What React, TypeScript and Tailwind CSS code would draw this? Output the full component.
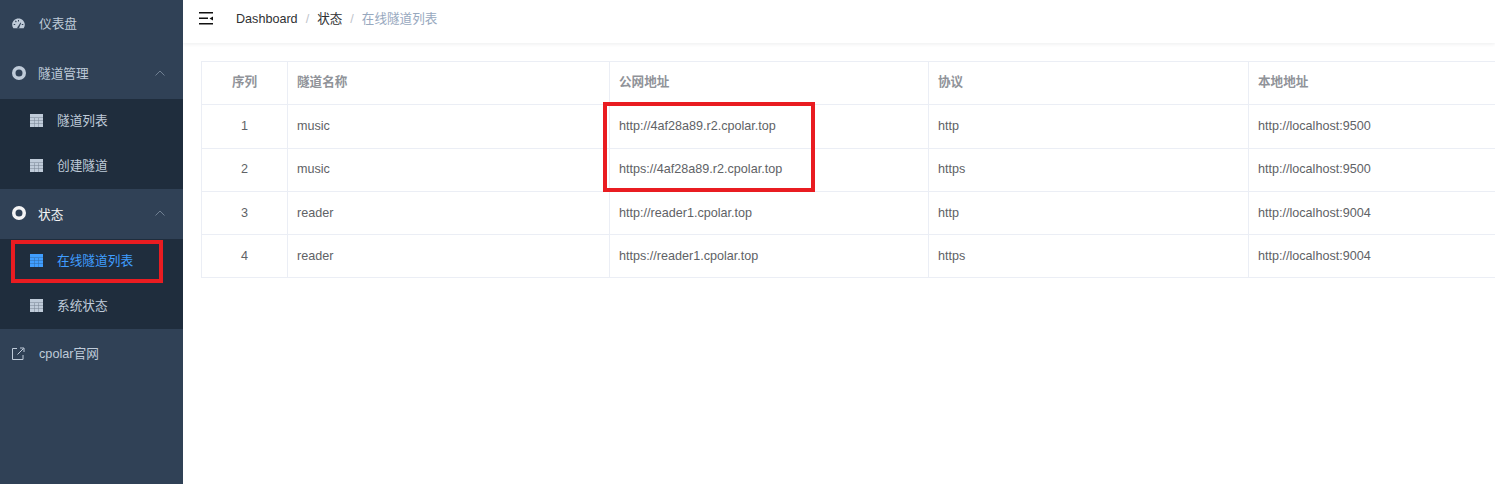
const FONT = "font-['Liberation_Sans','Noto_Sans_CJK_SC',sans-serif]";

const rows = [
  { id: 1, name: "music", url: "http://4af28a89.r2.cpolar.top", proto: "http", local: "http://localhost:9500" },
  { id: 2, name: "music", url: "https://4af28a89.r2.cpolar.top", proto: "https", local: "http://localhost:9500" },
  { id: 3, name: "reader", url: "http://reader1.cpolar.top", proto: "http", local: "http://localhost:9004" },
  { id: 4, name: "reader", url: "https://reader1.cpolar.top", proto: "https", local: "http://localhost:9004" },
];

function GaugeIcon() {
  return (
    <svg width="13" height="11" viewBox="0 0 13 11" className="mb-[2px] shrink-0">
      <path
        fillRule="evenodd"
        fill="currentColor"
        d="M6.5 0.5C3 0.5 0.2 3.2 0.2 6.6c0 1.4.4 2.7 1.2 3.6h10.2c.8-.9 1.2-2.2 1.2-3.6C12.600 3.200 10 .5 6.500 .5zM6 2h1v1.500H6zM3 3.200l.8-.6.9 1.200-.8.6zM1.700 6h1.500v1H1.700zM9.800 6h1.500v1H9.800zM6 8.500l2.500-4 .7.400L7.300 9.200A1 1 0 1 1 6 8.500z"
      />
    </svg>
  );
}

function RingIcon() {
  return (
    <svg width="14" height="14" viewBox="0 0 14 14" className="mb-[2px] shrink-0">
      <circle cx="7" cy="7" r="5.250" fill="none" stroke="currentColor" strokeWidth="3.500" />
    </svg>
  );
}

function TableIcon() {
  return (
    <svg width="13" height="13" viewBox="0 0 13 13" className="mb-[3px] shrink-0" fill="currentColor">
      <rect x="0" y="0" width="13" height="13" opacity="0.55" />
      <rect x="0" y="0" width="13" height="3.500" />
      <rect x="0" y="4" width="4" height="2.500" />
      <rect x="4.500" y="4" width="4" height="2.500" />
      <rect x="9" y="4" width="4" height="2.500" />
      <rect x="0" y="7" width="4" height="2.500" />
      <rect x="4.500" y="7" width="4" height="2.500" />
      <rect x="9" y="7" width="4" height="2.500" />
      <rect x="0" y="10" width="4" height="3" />
      <rect x="4.500" y="10" width="4" height="3" />
      <rect x="9" y="10" width="4" height="3" />
    </svg>
  );
}

function LinkIcon() {
  return (
    <svg width="13" height="13" viewBox="0 0 13 13" className="mb-[2px] shrink-0" fill="none" stroke="currentColor" strokeWidth="1">
      <path d="M5 1.500H.5v11H11V8" />
      <path d="M5.500 7.500l6-6M8 1h4v4" />
    </svg>
  );
}

function Chevron() {
  return (
    <svg width="10" height="6" viewBox="0 0 10 6" className="mb-[2px] ml-auto mr-[18px] shrink-0 text-[#6f7f92]" fill="none" stroke="currentColor" strokeWidth="1">
      <path d="M.5 5.500 5 1l4.500 4.500" />
    </svg>
  );
}

function SubItem({ label, active }: { label: string; active?: boolean }) {
  return (
    <div className={`flex h-[45px] items-center pl-[30px] ${active ? "text-[#409eff]" : "text-[#bfcbd9]"}`}>
      <TableIcon />
      <span className="ml-[14px]">{label}</span>
    </div>
  );
}

function Sidebar() {
  return (
    <aside className="relative w-[183px] shrink-0 self-stretch overflow-hidden bg-[#304156] text-[12.7px] text-[#bfcbd9]">
      <div className="mt-[-1px] flex h-[50px] items-center pl-[12px]">
        <GaugeIcon />
        <span className="ml-[14px] pt-[2px]">仪表盘</span>
      </div>
      <div className="flex h-[50px] items-center pl-[12px]">
        <RingIcon />
        <span className="ml-[12px] pt-[2px]">隧道管理</span>
        <Chevron />
      </div>
      <div className="bg-[#1f2d3d]">
        <SubItem label="隧道列表" />
        <SubItem label="创建隧道" />
      </div>
      <div className="flex h-[50px] items-center pl-[12px] text-[#f4f4f5]">
        <RingIcon />
        <span className="ml-[12px] pt-[3px]">状态</span>
        <Chevron />
      </div>
      <div className="bg-[#1f2d3d]">
        <SubItem label="在线隧道列表" active />
        <SubItem label="系统状态" />
      </div>
      <div className="flex h-[50px] items-center pl-[12px]">
        <LinkIcon />
        <span className="ml-[14px] pt-[2px]">cpolar官网</span>
      </div>
      <div className="absolute left-[11px] top-[240px] h-[43px] w-[152px] border-[4px] border-[#e91c21]" />
    </aside>
  );
}

function Header() {
  return (
    <header className="flex h-[43px] items-center pb-[4px] shadow-[0_1px_4px_rgba(0,21,41,0.08)]">
      <svg width="14" height="13" viewBox="0 0 14 13" className="mb-[2px] ml-[16px] shrink-0" fill="#111">
        <rect x="0" y="0" width="14" height="1.500" />
        <rect x="0" y="5.500" width="9" height="1.500" />
        <rect x="0" y="11" width="14" height="1.500" />
        <path d="M14 4.500v4l-3.500-2z" />
      </svg>
      <nav className="ml-[23px] flex items-center text-[12.6px] text-[#303133]">
        <span>Dashboard</span>
        <span className="mx-[8px] text-[#c0c4cc]">/</span>
        <span>状态</span>
        <span className="mx-[8px] text-[#c0c4cc]">/</span>
        <span className="text-[#97a8be]">在线隧道列表</span>
      </nav>
    </header>
  );
}

function Table() {
  const th = "border border-[#ebeef5] px-[9px] pb-[2px] h-[43px] text-[12.6px] font-bold text-[#909399]";
  const td = "border border-[#ebeef5] px-[9px] text-[12.6px] text-[#606266]";
  return (
    <table className="w-[1320px] table-fixed border-collapse">
      <colgroup>
        <col className="w-[86px]" />
        <col className="w-[322px]" />
        <col className="w-[319px]" />
        <col className="w-[320px]" />
        <col />
      </colgroup>
      <thead>
        <tr>
          <th className={`${th} text-center`}>序列</th>
          <th className={`${th} text-left`}>隧道名称</th>
          <th className={`${th} text-left`}>公网地址</th>
          <th className={`${th} text-left`}>协议</th>
          <th className={`${th} text-left`}>本地地址</th>
        </tr>
      </thead>
      <tbody>
        {rows.map((r) => {
          const cell = r.id === 2 ? `${td} pb-[2px]` : td;
          return (
            <tr key={r.id} className={r.id === 1 ? "h-[44px]" : "h-[43px]"}>
              <td className={`${cell} text-center`}>{r.id}</td>
              <td className={cell}>{r.name}</td>
              <td className={cell}>{r.url}</td>
              <td className={cell}>{r.proto}</td>
              <td className={cell}>{r.local}</td>
            </tr>
          );
        })}
      </tbody>
    </table>
  );
}

export default function App() {
  return (
    <div className={`flex h-[484px] w-[1495px] overflow-hidden bg-white ${FONT}`}>
      <Sidebar />
      <main className="relative min-w-0 flex-1 overflow-hidden">
        <Header />
        <div className="pl-[18px] pt-[18px]">
          <Table />
        </div>
        <div className="absolute left-[420px] top-[102px] h-[90px] w-[212px] border-[4px] border-[#e91c21]" />
      </main>
    </div>
  );
}
